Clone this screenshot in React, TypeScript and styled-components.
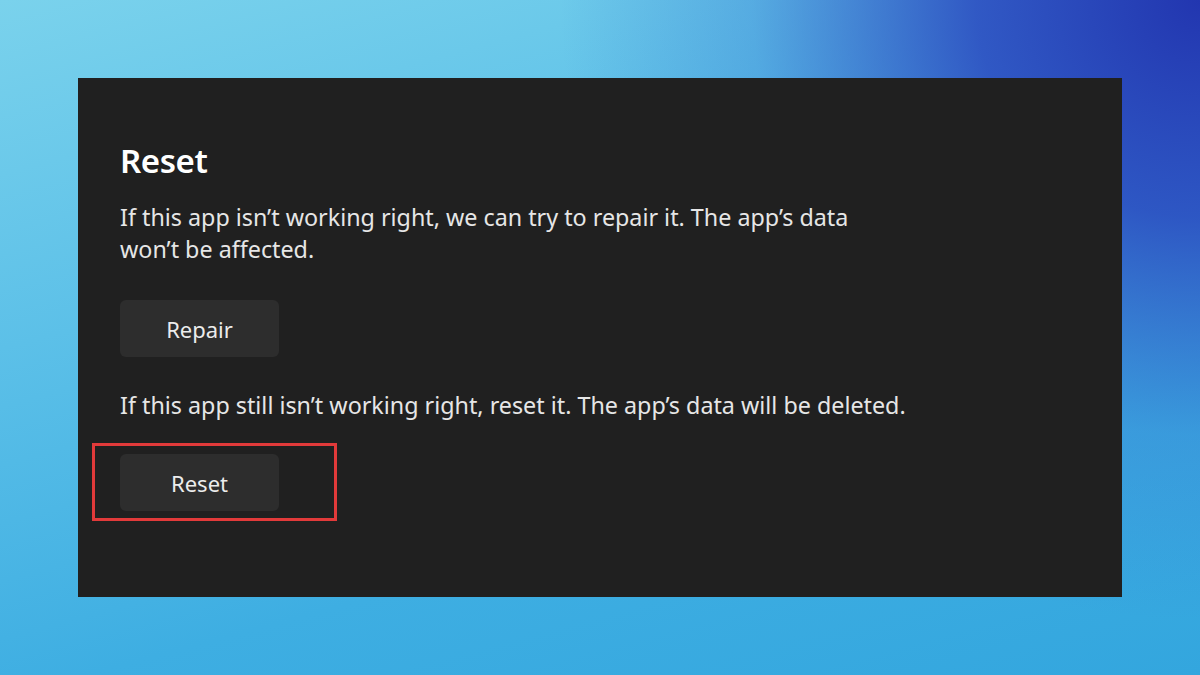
import React from 'react'
import styled, { createGlobalStyle } from 'styled-components'

const GlobalStyle = createGlobalStyle`
  html, body {
    margin: 0;
    padding: 0;
  }
  body {
    font-family: 'Noto Sans', 'Open Sans', sans-serif;
  }
`

const Page = styled.div`
  width: 1200px;
  height: 675px;
  box-sizing: border-box;
  padding: 78px;
  background:
    radial-gradient(ellipse 640px 620px at 100% 0%, #2236b0 0%, rgba(40, 70, 190, 0.85) 35%, rgba(52, 120, 210, 0.35) 70%, rgba(52, 140, 220, 0) 100%),
    linear-gradient(165deg, #7ad2ec 0%, #5cc0e8 35%, #3eaee2 70%, #33a6de 100%);
  overflow: hidden;
`

const Panel = styled.section`
  height: 519px;
  box-sizing: border-box;
  padding: 63px 42px 0;
  background: #202020;
  color: #ffffff;
`

const Title = styled.h2`
  margin: 0;
  font-size: 33px;
  font-weight: 600;
  line-height: 40px;
  letter-spacing: -0.4px;
`

const Text = styled.p<{ $gap?: number; $max?: number }>`
  margin: ${(p) => p.$gap ?? 0}px 0 0;
  max-width: ${(p) => (p.$max ? `${p.$max}px` : 'none')};
  font-size: 23.3px;
  line-height: 32px;
  color: #e6e6e6;
`

const Button = styled.button<{ $gap?: number }>`
  display: block;
  margin-top: ${(p) => p.$gap ?? 0}px;
  width: 159px;
  height: 57px;
  padding: 0;
  border: none;
  border-radius: 6px;
  background: #2d2d2d;
  color: #ececec;
  font-family: inherit;
  font-size: 22px;
  cursor: pointer;
`

const Highlight = styled.div`
  display: inline-block;
  margin: 22px 0 0 -28px;
  padding: 8px 55px 7px 25px;
  border: 3px solid #e23a3a;
`

export default function App(): React.ReactElement {
  return (
    <>
      <GlobalStyle />
      <Page>
        <Panel>
          <Title>Reset</Title>
          <Text $gap={20} $max={770}>
            If this app isn’t working right, we can try to repair it. The app’s data won’t be
            affected.
          </Text>
          <Button $gap={35}>Repair</Button>
          <Text $gap={32}>
            If this app still isn’t working right, reset it. The app’s data will be deleted.
          </Text>
          <Highlight>
            <Button>Reset</Button>
          </Highlight>
        </Panel>
      </Page>
    </>
  )
}
